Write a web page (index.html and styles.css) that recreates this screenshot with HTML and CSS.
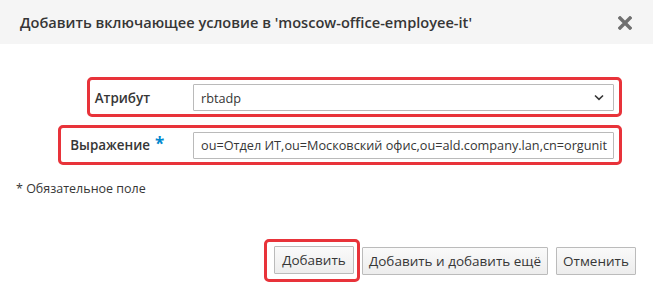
FILE: index.html
```html
<!DOCTYPE html>
<html lang="ru">
<head>
  <meta charset="UTF-8" />
  <title>Добавить включающее условие</title>
  <link rel="stylesheet" href="styles.css">
</head>
<body>
  <div class="modal">
    <div class="modal-header">
      <h4 class="modal-title">Добавить включающее условие в 'moscow-office-employee-it'</h4>
      <button class="close-btn" aria-label="Закрыть">
        <svg width="14" height="14" viewBox="0 0 14 14">
          <path d="M2 2 L12 12 M12 2 L2 12" stroke="#707070" stroke-width="3.4" stroke-linecap="square" />
        </svg>
      </button>
    </div>

    <div class="modal-body">
      <div class="form-row">
        <div class="mark mark-attr">
          <label class="field-label">Атрибут<span class="req"></span></label>
          <div class="select">
            <span>rbtadp</span>
            <svg width="10" height="7" viewBox="0 0 10 7">
              <path d="M1 1.5 L5 5.3 L9 1.5" fill="none" stroke="#363636" stroke-width="1.6" />
            </svg>
          </div>
        </div>
      </div>

      <div class="form-row">
        <div class="mark mark-expr">
          <label class="field-label">Выражение<span class="req">*</span></label>
          <input class="text-input" type="text" value="ou=Отдел ИТ,ou=Московский офис,ou=ald.company.lan,cn=orgunit">
        </div>
      </div>

      <p class="required-note">* Обязательное поле</p>
    </div>

    <div class="modal-footer">
      <div class="mark mark-btn">
        <button class="btn">Добавить</button>
      </div>
      <button class="btn">Добавить и добавить ещё</button>
      <button class="btn">Отменить</button>
    </div>
  </div>
</body>
</html>
```

FILE: styles.css
```css
* {
  box-sizing: border-box;
  margin: 0;
  padding: 0;
}

body {
  font-family: "Open Sans", sans-serif;
  color: #363636;
  background: #fff;
  width: 653px;
  height: 292px;
  overflow: hidden;
}

.modal-header {
  display: flex;
  align-items: center;
  justify-content: space-between;
  height: 44px;
  padding: 0 21px 0 20px;
  background-color: #f5f5f5;
}

.modal-title {
  font-size: 14.6px;
  font-weight: 600;
  color: #363636;
}

.close-btn {
  border: none;
  background: none;
  display: flex;
  padding: 0;
  margin-top: 1px;
}

.modal-body {
  padding: 33px 0 0 16px;
}

.form-row {
  display: flex;
  justify-content: flex-end;
  padding-right: 31px;
  margin-bottom: 8px;
}

.mark {
  display: flex;
  align-items: center;
  border: 3px solid #e8333a;
  border-radius: 5px;
}

.mark-attr {
  height: 40px;
  padding: 1px 5px 0 5px;
}

.mark-expr {
  height: 40px;
  padding: 0 5px 0 9px;
}

.field-label {
  display: flex;
  align-items: center;
  font-size: 13.4px;
  font-weight: 600;
}

.req {
  width: 43px;
  padding-left: 5px;
  color: #0088ce;
  font-size: 17px;
  font-weight: 700;
  line-height: 1;
  position: relative;
  top: -2px;
}

.select,
.text-input {
  width: 421px;
  height: 27px;
  border: 1px solid #bababa;
  border-radius: 1px;
  background: #fff;
  font-family: "Open Sans", sans-serif;
  font-size: 12.7px;
  color: #363636;
}

.select {
  display: flex;
  align-items: center;
  justify-content: space-between;
  padding: 0 9px 0 7px;
}

.text-input {
  padding: 0 4px 0 7px;
  outline: none;
}

.required-note {
  font-size: 12.5px;
  margin-top: 15px;
}

.modal-footer {
  display: flex;
  justify-content: flex-end;
  align-items: center;
  padding: 42px 17px 0 0;
}

.mark-btn {
  padding: 4px 3px 5px 7px;
  margin-right: 2px;
}

.btn {
  min-width: 80px;
  height: 28px;
  padding: 0 6px;
  border: 1px solid #bbb;
  border-radius: 1px;
  background: linear-gradient(#fafafa, #ededed);
  font-family: "Open Sans", sans-serif;
  font-size: 13.5px;
  color: #363636;
}

.btn + .btn {
  margin-left: 8px;
}
```
